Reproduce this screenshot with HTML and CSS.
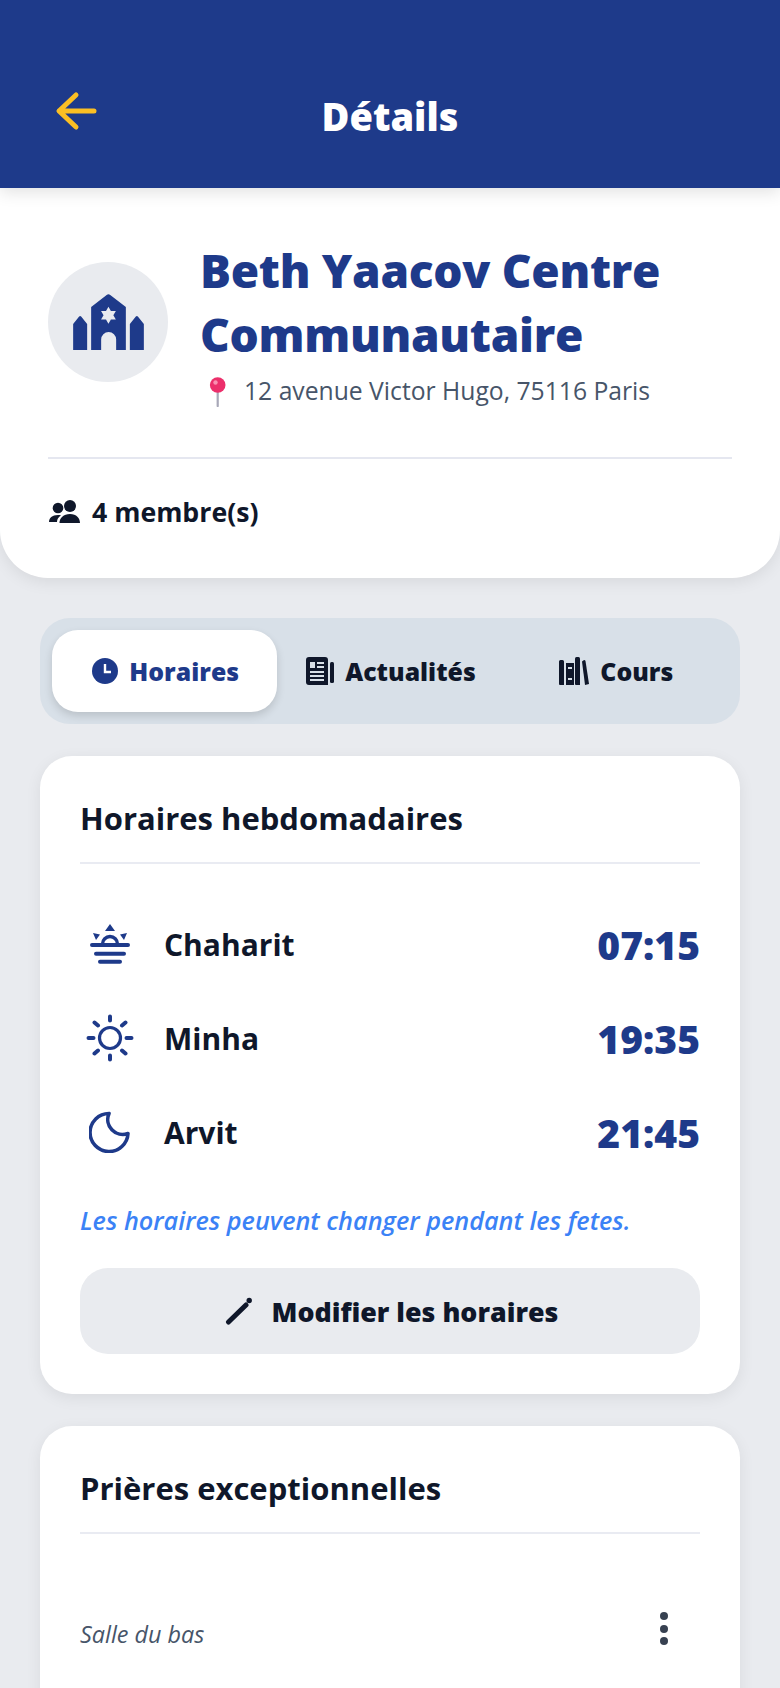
FILE: index.html
```html
<!DOCTYPE html>
<html lang="fr">
<head>
<meta charset="utf-8">
<title>Détails</title>
<link rel="stylesheet" href="styles.css">
</head>
<body>
<div class="page">
  <header class="topbar">
    <svg class="back" viewBox="0 0 44 42" width="44" height="42"><path d="M21 5 4 21h35M4 21l17 16" fill="none" stroke="#fbbf24" stroke-width="5" stroke-linecap="round" stroke-linejoin="round"/></svg>
    <h1 class="topbar-title">Détails</h1>
  </header>
  <section class="hero">
    <div class="hero-main">
      <div class="avatar">
        <svg viewBox="0 0 70.700 56" width="71" height="56"><path fill="#1e3a8a" fill-rule="evenodd" d="M0 56V30L6 22.500a1.500 1.500 0 0 1 2 0L14 30V56zM56.700 56V30l6-7.500a1.500 1.500 0 0 1 2 0l6 7.500V56zM18 56V13L33.500 1a3 3 0 0 1 3.600 0L52.700 13V56H43V45.500a7.500 7.500 0 0 0-15 0V56zM35.300 12.800L37.750 17.060 42.700 17 40.200 21.300 42.700 25.500 37.750 25.540 35.300 29.800 32.850 25.540 27.900 25.500 30.400 21.300 27.900 17 32.850 17.060z"/></svg>
      </div>
      <div class="hero-text">
        <h2 class="hero-name">Beth Yaacov Centre Communautaire</h2>
        <p class="hero-address">
          <svg class="pin" viewBox="0 0 30 32" width="30" height="32"><path d="M17.700 14v17" stroke="#a8a8b8" stroke-width="2.200" stroke-linecap="round"/><circle cx="17.700" cy="10" r="7.800" fill="#ec2f6b"/><circle cx="15.500" cy="7.500" r="2.200" fill="#f98fb0"/></svg>
          <span>12 avenue Victor Hugo, 75116 Paris</span>
        </p>
      </div>
    </div>
    <div class="hero-members">
      <svg viewBox="0 0 32 24" width="32" height="24"><g fill="#0f172a"><circle cx="10" cy="8" r="5.300"/><circle cx="22" cy="6" r="6"/><path d="M1 22c0-4 3-7 9-7 1.200 0 2 .1 3 .4C10.500 17 9 19 9 22zM11.500 23c0-5 4-9 10.500-9s10 4 10 9z"/></g></svg>
      <span>4 membre(s)</span>
    </div>
  </section>
  <nav class="tabs">
    <div class="tab tab-active">
      <svg viewBox="0 0 26 26" width="26" height="26"><circle cx="13" cy="13" r="13" fill="#1e3a8a"/><path d="M13 6v8h6" fill="none" stroke="#fff" stroke-width="2.400"/></svg>
      <span>Horaires</span>
    </div>
    <div class="tab">
      <svg viewBox="0 0 28 28" width="28" height="28"><path fill="#0f172a" fill-rule="evenodd" d="M3 0h16a3 3 0 0 1 3 3v25H3a3 3 0 0 1-3-3V3a3 3 0 0 1 3-3zM4 5v6h5V5zM11 5v2h7V5zM11 9v2h7V9zM4 14v2h14v-2zM4 18v2h14v-2zM4 22v2h14v-2z"/><rect x="24" y="5" width="4" height="21" rx="1.500" fill="#0f172a"/></svg>
      <span>Actualités</span>
    </div>
    <div class="tab">
      <svg viewBox="0 0 30 28" width="30" height="28"><g fill="#0f172a"><path d="M1.500 3h2a1.500 1.500 0 0 1 1.500 1.500V28H1a1 1 0 0 1-1-1V4.500A1.500 1.500 0 0 1 1.500 3z"/><path fill-rule="evenodd" d="M7 6h8v22H7zM9 10v2h4v-2zM9 21v2h4v-2z"/><path d="M17.500 0h2A1.500 1.500 0 0 1 21 1.500V28h-4a1 1 0 0 1-1-1V1.500A1.500 1.500 0 0 1 17.500 0z"/><path d="M23 4.500 25 3 a1.500 1.500 0 0 1 1.500 1L30 27l-4 1z"/></g></svg>
      <span>Cours</span>
    </div>
  </nav>
  <section class="card">
    <h3 class="card-title">Horaires hebdomadaires</h3>
    <ul class="times">
      <li class="time-row">
        <span class="time-icon"><svg viewBox="0 0 40 40" width="40" height="40" fill="none" stroke="#1e3a8a" stroke-width="3.400" stroke-linecap="round"><path d="M12.500 20a7.500 7.500 0 0 1 15 0"/><path d="M2 21h36M6 29.700h28M10 37.700h20" stroke-width="4"/><path d="M20 0l5 7H15zM3 9l7 1.500L6 16zM37 9l-7 1.500L34 16z" fill="#1e3a8a" stroke="none"/></svg></span>
        <span class="time-name">Chaharit</span><span class="time-value">07:15</span>
      </li>
      <li class="time-row">
        <span class="time-icon"><svg viewBox="0 0 48 48" width="48" height="48" fill="none" stroke="#1e3a8a" stroke-width="3.200" stroke-linecap="round"><circle cx="24" cy="24" r="10.500"/><path d="M24 2.500v4M24 41.500v4M2.500 24h5M40.500 24h5M8.500 8.500l3.500 3M36 36.500l3.500 3M8.500 39.500l3.500-3M36 11.500l3.500-3" stroke-width="4"/></svg></span>
        <span class="time-name">Minha</span><span class="time-value">19:35</span>
      </li>
      <li class="time-row">
        <span class="time-icon"><svg viewBox="0 0 42 42" width="42" height="42" fill="none" stroke="#1e3a8a" stroke-width="3.600" stroke-linejoin="round"><path d="M20 2.500a19 19 0 1 0 19 20 15 15 0 0 1-19-20z"/></svg></span>
        <span class="time-name">Arvit</span><span class="time-value">21:45</span>
      </li>
    </ul>
    <p class="note">Les horaires peuvent changer pendant les fetes.</p>
    <div class="edit-btn">
      <svg viewBox="0 0 28 28" width="28" height="28"><path d="M3.500 25 21 8" fill="none" stroke="#0f172a" stroke-width="5" stroke-linecap="round"/><circle cx="24.200" cy="3.500" r="2.700" fill="#0f172a"/></svg>
      <span>Modifier les horaires</span>
    </div>
  </section>
  <section class="card card-open">
    <h3 class="card-title">Prières exceptionnelles</h3>
    <div class="exception">
      <span class="room">Salle du bas</span>
      <span class="dots"><i></i><i></i><i></i></span>
    </div>
  </section>
</div>
</body>
</html>
```
FILE: styles.css
```css
* { box-sizing: border-box; }
html, body { margin: 0; height: 100%; overflow: hidden; }
body { background: #e9ebef; font-family: "Open Sans", "Noto Sans", sans-serif; color: #0f172a; }
.page { display: flex; flex-direction: column; height: 1688px; overflow: hidden; }
h1, h2, h3, p, ul { margin: 0; padding: 0; }
ul { list-style: none; }

.topbar { position: relative; z-index: 2; flex: none; height: 188px; background: #1e3a8a; box-shadow: 0 4px 16px rgba(0,0,0,.12); display: flex; align-items: center; justify-content: center; padding-top: 44px; }
.topbar-title { font-size: 38px; font-weight: 800; color: #fff; }
.back { position: absolute; left: 55px; top: 90px; }

.hero { flex: none; height: 390px; background: #fff; border-radius: 0 0 48px 48px; padding: 50px 48px 0; box-shadow: 0 4px 16px rgba(0,0,0,.08); }
.hero-main { display: flex; align-items: flex-start; gap: 32px; padding-bottom: 50px; border-bottom: 2px solid #e5e7f0; }
.avatar { flex: none; width: 120px; height: 120px; margin-top: 24px; border-radius: 50%; background: #e9ebef; display: flex; align-items: center; justify-content: center; }
.hero-name { font-size: 46px; line-height: 64px; font-weight: 800; color: #1e3a8a; letter-spacing: -.3px; }
.hero-address { display: flex; align-items: center; gap: 14px; margin-top: 9px; font-size: 24.700px; line-height: 32px; color: #475569; }
.pin { flex: none; }
.hero-members { display: flex; align-items: center; gap: 12px; margin-top: 36px; font-size: 26.700px; line-height: 34px; font-weight: 700; }

.tabs { flex: none; display: flex; align-items: stretch; margin: 40px 40px 0; height: 106px; padding: 12px; border-radius: 30px; background: #d8e0e8; }
.tab { flex: 1; display: flex; align-items: center; justify-content: center; gap: 11px; padding-left: 2px; font-size: 24.800px; font-weight: 800; border-radius: 26px; }
.tab-active { background: #fff; color: #1e3a8a; box-shadow: 0 4px 8px rgba(0,0,0,.14); }

.card { flex: none; margin: 32px 40px 0; padding: 42px 40px 40px; background: #fff; border-radius: 32px; box-shadow: 0 4px 16px rgba(0,0,0,.07); }
.card-open { padding-bottom: 160px; }
.card-title { font-size: 31px; line-height: 40px; font-weight: 700; padding-bottom: 24px; border-bottom: 2px solid #e9ebf2; }
.times { padding-top: 33px; }
.time-row { display: flex; align-items: center; height: 94px; }
.time-icon { flex: none; width: 60px; display: flex; justify-content: center; margin-right: 24px; }
.time-name { flex: 1; font-size: 30px; font-weight: 700; }
.time-value { font-size: 39px; font-weight: 800; color: #1e3a8a; }
.note { margin-top: 24px; font-size: 25.250px; line-height: 34px; font-weight: 600; font-style: italic; color: #3b82f6; }
.edit-btn { display: flex; align-items: center; justify-content: center; gap: 19px; height: 86px; margin-top: 31px; padding-left: 3px; border-radius: 28px; background: #e9ebef; font-size: 26.800px; font-weight: 800; }
.exception { display: flex; align-items: center; justify-content: space-between; padding: 78px 32px 0 0; }
.room { font-size: 23.400px; font-style: italic; color: #475569; }
.dots { display: flex; flex-direction: column; gap: 4.500px; margin-bottom: 10px; }
.dots i { display: block; width: 8px; height: 8px; border-radius: 50%; background: #374151; }
```
